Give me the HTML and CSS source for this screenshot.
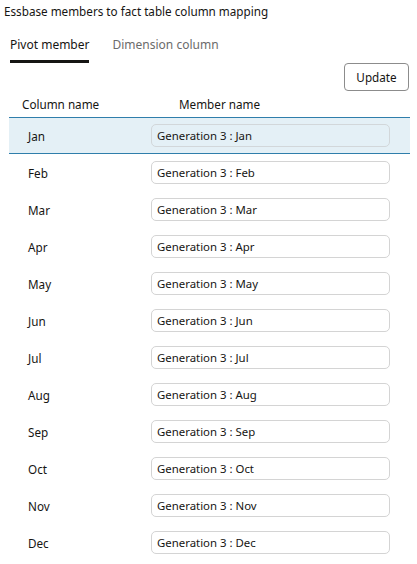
FILE: index.html
```html
<!DOCTYPE html>
<html>
<head>
<meta charset="utf-8">
<link rel="stylesheet" href="styles.css">
</head>
<body>
<div class="page">
  <div class="title">Essbase members to fact table column mapping</div>
  <div class="tabs">
    <div class="tab active">Pivot member</div>
    <div class="tab">Dimension column</div>
  </div>
  <div class="toolbar"><button class="btn">Update</button></div>
  <div class="table">
    <div class="head">
      <div class="h1">Column name</div>
      <div class="h2">Member name</div>
    </div>
    <div class="row selected"><div class="cell">Jan</div><div class="field">Generation 3 : Jan</div></div>
    <div class="row"><div class="cell">Feb</div><div class="field">Generation 3 : Feb</div></div>
    <div class="row"><div class="cell">Mar</div><div class="field">Generation 3 : Mar</div></div>
    <div class="row"><div class="cell">Apr</div><div class="field">Generation 3 : Apr</div></div>
    <div class="row"><div class="cell">May</div><div class="field">Generation 3 : May</div></div>
    <div class="row"><div class="cell">Jun</div><div class="field">Generation 3 : Jun</div></div>
    <div class="row"><div class="cell">Jul</div><div class="field">Generation 3 : Jul</div></div>
    <div class="row"><div class="cell">Aug</div><div class="field">Generation 3 : Aug</div></div>
    <div class="row"><div class="cell">Sep</div><div class="field">Generation 3 : Sep</div></div>
    <div class="row"><div class="cell">Oct</div><div class="field">Generation 3 : Oct</div></div>
    <div class="row"><div class="cell">Nov</div><div class="field">Generation 3 : Nov</div></div>
    <div class="row"><div class="cell">Dec</div><div class="field">Generation 3 : Dec</div></div>
  </div>
</div>
</body>
</html>
```

FILE: styles.css
```css
html, body {
  margin: 0;
  padding: 0;
  background: #ffffff;
}
body {
  font-family: "Noto Sans", "Open Sans", sans-serif;
  color: #161513;
  font-size: 11.7px;
}
.page {
  width: 417px;
}
.title {
  padding: 3px 0 0 4px;
  height: 17px;
  line-height: 17px;
  font-size: 11.7px;
}
.tabs {
  display: flex;
  gap: 23px;
  padding: 16px 0 0 10px;
}
.tab {
  font-size: 12px;
  line-height: 18px;
  padding-bottom: 6px;
  color: #6b6b6b;
  border-bottom: 3px solid transparent;
}
.tab.active {
  color: #161513;
  border-bottom-color: #161513;
}
.toolbar {
  display: flex;
  justify-content: flex-end;
  padding-right: 8px;
}
.btn {
  font-family: inherit;
  font-size: 11.7px;
  color: #161513;
  background: #ffffff;
  border: 1px solid #8c8c8c;
  border-radius: 4px;
  width: 65px;
  height: 28px;
  padding: 0;
}
.table {
  margin: 0 7px 0 9px;
}
.head {
  display: flex;
  height: 26px;
  align-items: center;
  font-size: 11.7px;
}
.h1 {
  padding-left: 13px;
  width: 157px;
}
.row {
  display: grid;
  grid-template-columns: 142px 239px;
  align-items: center;
  height: 37px;
  box-sizing: border-box;
}
.row.selected {
  background: #e4f0f6;
  border-top: 1px solid #2f7eab;
  border-bottom: 1px solid #2f7eab;
}
.cell {
  padding-left: 19px;
  font-size: 11.7px;
}
.field {
  height: 23px;
  box-sizing: border-box;
  border: 1px solid #d4d4d4;
  border-radius: 5px;
  background: #ffffff;
  padding-left: 5px;
  line-height: 21px;
  font-size: 11.4px;
}
.row.selected .field {
  background: transparent;
  border-color: #d2d7da;
}
```
